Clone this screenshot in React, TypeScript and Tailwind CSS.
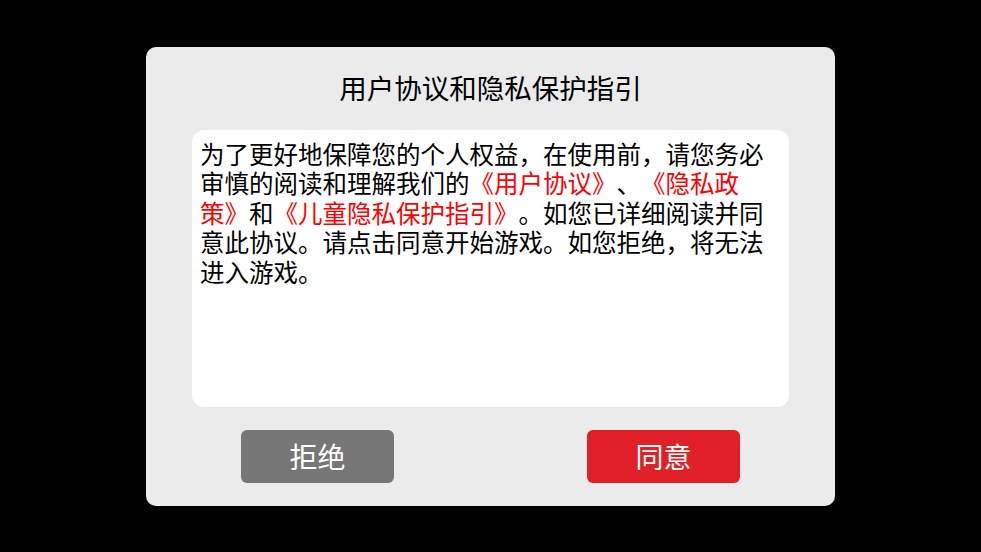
import React from 'react';

const FONT = { fontFamily: '"Noto Sans CJK SC", "Noto Sans", sans-serif' };

const Red: React.FC<{ children: React.ReactNode }> = ({ children }) => (
  <span className="text-[#ff0000]">{children}</span>
);

const App: React.FC = () => {
  return (
    <div className="w-[981px] h-[552px] bg-black flex items-center justify-center" style={FONT}>
      <div className="w-[689px] h-[459px] bg-[#ebebeb] rounded-[10px] px-[46px] flex flex-col">
        <div className="h-[83px] flex items-center justify-center text-[27.5px] text-black leading-none">
          用户协议和隐私保护指引
        </div>
        <div className="h-[277px] bg-white rounded-[12px] pl-2 pr-[14px] pt-[9px] text-[24.5px] leading-[29.5px] text-black [text-spacing-trim:space-all]">
          为了更好地保障您的个人权益，在使用前，请您务必审慎的阅读和理解我们的
          <Red>《用户协议》</Red>、<Red>《隐私政策》</Red>和<Red>《儿童隐私保护指引》</Red>
          。如您已详细阅读并同意此协议。请点击同意开始游戏。如您拒绝，将无法进入游戏。
        </div>
        <div className="flex-1 flex items-center justify-between px-[49px]">
          <button className="w-[153px] h-[53px] rounded-[6px] bg-[#777777] text-white text-[28px] leading-none">
            拒绝
          </button>
          <button className="w-[153px] h-[53px] rounded-[6px] bg-[#e01f26] text-white text-[28px] leading-none">
            同意
          </button>
        </div>
      </div>
    </div>
  );
};

export default App;
